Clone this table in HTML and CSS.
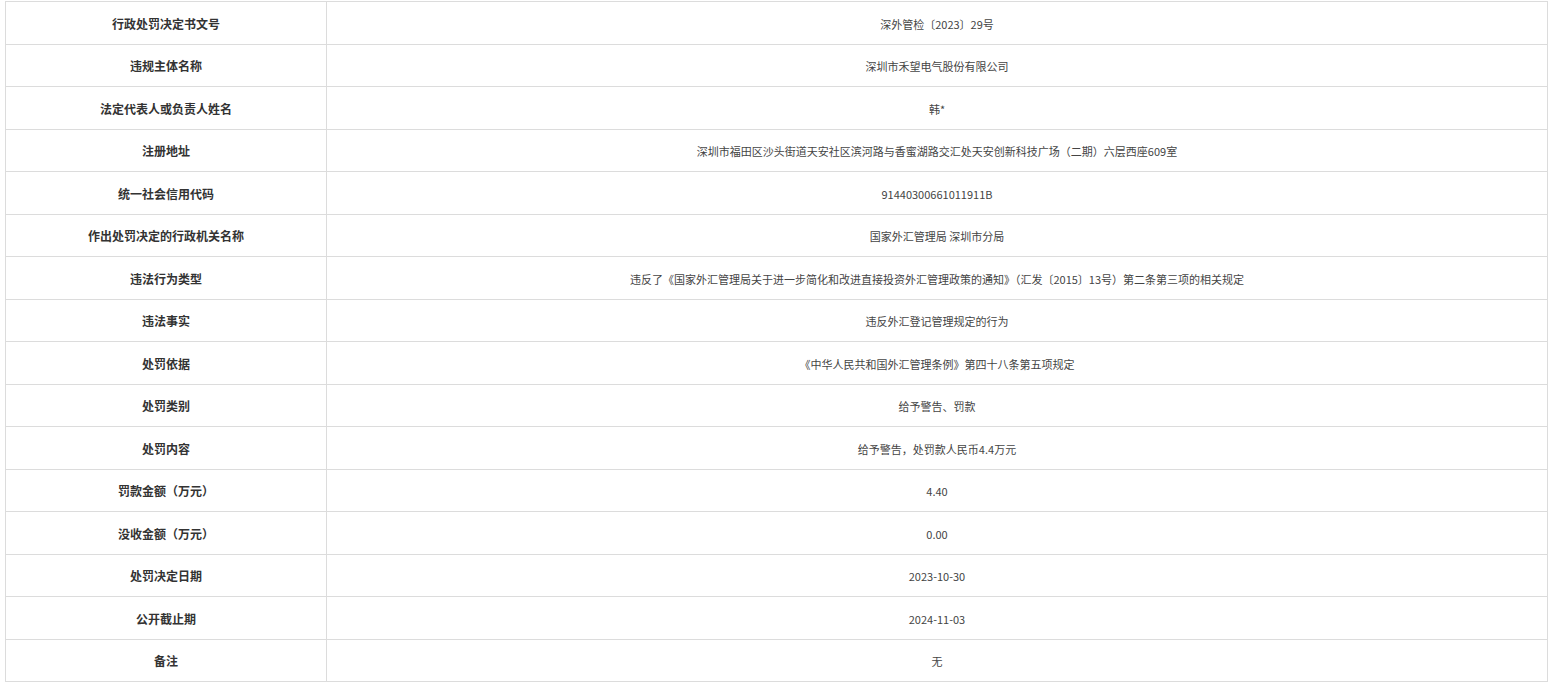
FILE: index.html
```html
<!DOCTYPE html>
<html lang="zh-CN">
<head>
<meta charset="utf-8">
<title>行政处罚信息</title>
<link rel="stylesheet" href="styles.css">
</head>
<body>
<table class="info">
  <colgroup><col class="c-label"><col class="c-value"></colgroup>
  <tbody>
    <tr><th>行政处罚决定书文号</th><td>深外管检〔2023〕29号</td></tr>
    <tr><th>违规主体名称</th><td>深圳市禾望电气股份有限公司</td></tr>
    <tr><th>法定代表人或负责人姓名</th><td>韩*</td></tr>
    <tr><th>注册地址</th><td>深圳市福田区沙头街道天安社区滨河路与香蜜湖路交汇处天安创新科技广场（二期）六层西座609室</td></tr>
    <tr><th>统一社会信用代码</th><td>91440300661011911B</td></tr>
    <tr><th>作出处罚决定的行政机关名称</th><td>国家外汇管理局 深圳市分局</td></tr>
    <tr><th>违法行为类型</th><td>违反了《国家外汇管理局关于进一步简化和改进直接投资外汇管理政策的通知》（汇发〔2015〕13号）第二条第三项的相关规定</td></tr>
    <tr><th>违法事实</th><td>违反外汇登记管理规定的行为</td></tr>
    <tr><th>处罚依据</th><td>《中华人民共和国外汇管理条例》第四十八条第五项规定</td></tr>
    <tr><th>处罚类别</th><td>给予警告、罚款</td></tr>
    <tr><th>处罚内容</th><td>给予警告，处罚款人民币4.4万元</td></tr>
    <tr><th>罚款金额（万元）</th><td>4.40</td></tr>
    <tr><th>没收金额（万元）</th><td>0.00</td></tr>
    <tr><th>处罚决定日期</th><td>2023-10-30</td></tr>
    <tr><th>公开截止期</th><td>2024-11-03</td></tr>
    <tr><th>备注</th><td>无</td></tr>
  </tbody>
</table>
</body>
</html>
```
FILE: styles.css
```css
html, body {
  margin: 0;
  padding: 0;
  background: #fff;
}
body {
  padding: 1px 0 0 5px;
  font-family: "Noto Sans CJK SC", "Liberation Sans", sans-serif;
  color: #333;
}
.info {
  border-collapse: collapse;
  width: 1543px;
  table-layout: fixed;
}
.c-label { width: 321px; }
.info tr { height: 42.5px; }
.info th, .info td {
  border: 1px solid #dcdcdc;
  text-align: center;
  vertical-align: middle;
  padding: 2px 8px 0;
  line-height: 16px;
}
.info th {
  font-size: 12px;
  font-weight: bold;
  color: #333;
}
.info td {
  font-size: 11px;
  font-weight: normal;
  color: #444;
}
```
